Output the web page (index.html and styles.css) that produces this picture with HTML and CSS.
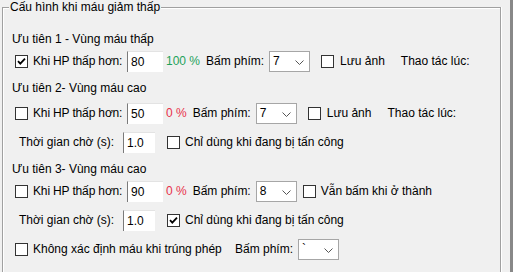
FILE: index.html
```html
<!DOCTYPE html>
<html lang="vi">
<head>
    <meta charset="UTF-8">
    <title>Cấu hình khi máu giảm thấp</title>
    <link rel="stylesheet" href="styles.css">
</head>
<body>
    <div class="main">
        <div class="group">
            <div class="group-title">Cấu hình khi máu giảm thấp</div>

            <div class="title t1">Ưu tiên 1 - Vùng máu thấp</div>
            <div class="row r1">
                <span class="cb checked"><svg width="11" height="11" viewBox="0 0 11 11"><path d="M2 5.2 L4.3 7.6 L9 2.6" fill="none" stroke="#000" stroke-width="1.8"/></svg></span>
                <span class="lbl-hp">Khi HP thấp hơn:</span>
                <span class="txt w-hp">80</span>
                <span class="pct good">100 %</span>
                <span class="key">Bấm phím:</span>
                <span class="combo">7<svg class="chev" width="9" height="5" viewBox="0 0 9 5"><path d="M0.5 0.5 L4.5 4.5 L8.5 0.5" fill="none" stroke="#555" stroke-width="1"/></svg></span>
                <span class="cb after-combo"></span>
                <span>Lưu ảnh</span>
                <span class="when">Thao tác lúc:</span>
            </div>

            <div class="title t2">Ưu tiên 2- Vùng máu cao</div>
            <div class="row r2">
                <span class="cb"></span>
                <span class="lbl-hp">Khi HP thấp hơn:</span>
                <span class="txt w-hp">50</span>
                <span class="pct bad">0 %</span>
                <span class="key">Bấm phím:</span>
                <span class="combo">7<svg class="chev" width="9" height="5" viewBox="0 0 9 5"><path d="M0.5 0.5 L4.5 4.5 L8.5 0.5" fill="none" stroke="#555" stroke-width="1"/></svg></span>
                <span class="cb after-combo"></span>
                <span>Lưu ảnh</span>
                <span class="when">Thao tác lúc:</span>
            </div>
            <div class="row r3 indent">
                <span class="lbl-wait">Thời gian chờ (s):</span>
                <span class="txt w-wait">1.0</span>
                <span class="cb after-wait"></span>
                <span>Chỉ dùng khi đang bị tấn công</span>
            </div>

            <div class="title t3">Ưu tiên 3- Vùng máu cao</div>
            <div class="row r4">
                <span class="cb"></span>
                <span class="lbl-hp">Khi HP thấp hơn:</span>
                <span class="txt w-hp">90</span>
                <span class="pct bad">0 %</span>
                <span class="key">Bấm phím:</span>
                <span class="combo">8<svg class="chev" width="9" height="5" viewBox="0 0 9 5"><path d="M0.5 0.5 L4.5 4.5 L8.5 0.5" fill="none" stroke="#555" stroke-width="1"/></svg></span>
                <span class="cb after-combo near"></span>
                <span>Vẫn bấm khi ở thành</span>
            </div>
            <div class="row r5 indent">
                <span class="lbl-wait">Thời gian chờ (s):</span>
                <span class="txt w-wait">1.0</span>
                <span class="cb checked after-wait"><svg width="11" height="11" viewBox="0 0 11 11"><path d="M2 5.2 L4.3 7.6 L9 2.6" fill="none" stroke="#000" stroke-width="1.8"/></svg></span>
                <span>Chỉ dùng khi đang bị tấn công</span>
            </div>
            <div class="row r6">
                <span class="cb"></span>
                <span class="lbl-magic">Không xác định máu khi trúng phép</span>
                <span class="key">Bấm phím:</span>
                <span class="combo">`<svg class="chev" width="9" height="5" viewBox="0 0 9 5"><path d="M0.5 0.5 L4.5 4.5 L8.5 0.5" fill="none" stroke="#555" stroke-width="1"/></svg></span>
            </div>
        </div>
    </div>
    <div class="edge"></div>
</body>
</html>
```

FILE: styles.css
```css
body {
    margin: 0;
    background-color: #f0f0f0;
    font-family: "Liberation Sans", Arial, sans-serif;
    font-size: 12px;
    color: #000;
    display: flex;
    height: 272px;
    overflow: hidden;
}
.main {
    width: 510px;
}
.edge {
    width: 3px;
    background-color: #888;
}
.group {
    margin: 7px 0 0 2px;
    width: 499px;
    height: 265px;
    box-sizing: border-box;
    border: 1px solid #a0a0a0;
    border-bottom: none;
    box-shadow: 1px 0 0 #fff, inset 1px 1px 0 #fff;
}
.group-title {
    width: max-content;
    margin: -8px 0 0 6px;
    padding: 0 1px;
    line-height: 15px;
    background-color: #f0f0f0;
}
.title {
    height: 16px;
    line-height: 16px;
    padding-left: 9px;
}
.t1 { margin-top: 16px; }
.t2 { margin-top: 8px; }
.t3 { margin-top: 8px; }
.row {
    display: flex;
    align-items: center;
    height: 22px;
    padding-left: 12px;
    white-space: nowrap;
}
.r1 { margin-top: 3px; }
.r2 { margin-top: 6px; }
.r3 { margin-top: 7px; }
.r4 { margin-top: 3px; }
.r5 { margin-top: 7px; }
.r6 { margin-top: 7px; }
.indent {
    padding-left: 16px;
}
.cb {
    width: 13px;
    height: 13px;
    box-sizing: border-box;
    border: 1px solid #333;
    background-color: #fff;
    margin-right: 6px;
    display: flex;
    align-items: center;
    justify-content: center;
}
.cb svg {
    display: block;
}
.lbl-hp {
    width: 94px;
    margin-left: -1px;
    letter-spacing: -0.15px;
}
.lbl-wait {
    width: 104px;
}
.lbl-magic {
    width: 202px;
    margin-left: -1px;
}
.txt {
    height: 21px;
    line-height: 21px;
    box-sizing: border-box;
    padding-left: 3px;
    background-color: #fff;
    border-left: 1px solid #7a7a7a;
    border-top: 1px solid #e3e3e3;
}
.w-hp {
    width: 36px;
    margin-right: 3px;
}
.w-wait {
    width: 32px;
}
.pct {
    margin-right: 6px;
}
.good { color: #1ea25a; }
.bad { color: #e8304a; }
.combo {
    position: relative;
    width: 41px;
    height: 21px;
    line-height: 19px;
    box-sizing: border-box;
    margin-left: 5px;
    padding-left: 3px;
    border: 1px solid #a6a6a6;
    background-color: #fff;
}
.chev {
    position: absolute;
    right: 5px;
    top: 8px;
}
.after-combo {
    margin-left: 11px;
}
.after-combo.near {
    margin-left: 6px;
    margin-right: 5px;
}
.after-wait {
    margin-left: 12px;
    margin-right: 5px;
}
.when {
    margin-left: 16px;
}
```
